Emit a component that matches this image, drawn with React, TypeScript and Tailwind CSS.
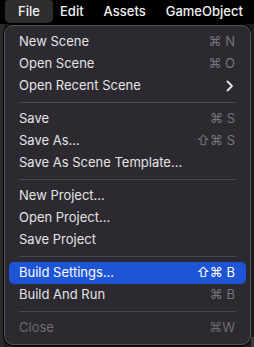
import React from 'react';

type Item =
  | { kind: 'sep' }
  | { kind: 'item'; label: string; shortcut?: string; submenu?: boolean; active?: boolean; disabled?: boolean };

const items: Item[] = [
  { kind: 'item', label: 'New Scene', shortcut: '⌘ N' },
  { kind: 'item', label: 'Open Scene', shortcut: '⌘ O' },
  { kind: 'item', label: 'Open Recent Scene', submenu: true },
  { kind: 'sep' },
  { kind: 'item', label: 'Save', shortcut: '⌘ S' },
  { kind: 'item', label: 'Save As...', shortcut: '⇧⌘ S' },
  { kind: 'item', label: 'Save As Scene Template...' },
  { kind: 'sep' },
  { kind: 'item', label: 'New Project...' },
  { kind: 'item', label: 'Open Project...' },
  { kind: 'item', label: 'Save Project' },
  { kind: 'sep' },
  { kind: 'item', label: 'Build Settings...', shortcut: '⇧⌘ B', active: true },
  { kind: 'item', label: 'Build And Run', shortcut: '⌘ B' },
  { kind: 'sep' },
  { kind: 'item', label: 'Close', shortcut: '⌘W', disabled: true },
];

const font = { fontFamily: 'Inter, "DejaVu Sans", sans-serif' };

export default function App() {
  return (
    <div className="w-[254px] h-[347px] bg-[#1c1c1c] overflow-hidden flex flex-col" style={font}>
      <div className="h-[24px] bg-black flex items-center text-[13px] font-medium text-[#f2f2f2] shrink-0">
        <div className="ml-[5px] h-[23px] self-start w-[48px] flex items-center justify-center rounded-b-[5px] rounded-t-[3px] bg-[#2e2e2e]">File</div>
        <div className="ml-[7px]">Edit</div>
        <div className="ml-[20px]">Assets</div>
        <div className="ml-[20px]">GameObject</div>
      </div>
      <div className="flex flex-1">
        <div className="w-[4px] bg-[#2a2a2a] shrink-0" />
        <div className="w-[247px] self-start mt-[1px] rounded-[9px] border border-[#55535a] bg-[#2c2a30] px-[4px] pt-[5px] pb-[5px] flex flex-col shadow-[0_0_0_1px_#000]">
          {items.map((it, i) =>
            it.kind === 'sep' ? (
              <div key={i} className="h-[11px] flex items-center px-[10px]">
                <div className="h-px w-full bg-[#4a484f]" />
              </div>
            ) : (
              <div
                key={i}
                className={`h-[22px] flex items-center justify-between pl-[10px] pr-[11px] rounded-[5px] text-[13px] ${
                  it.active ? 'bg-[#1d55d6] text-white' : it.disabled ? 'text-[#6c6a70]' : 'text-[#e4e3e6]'
                }`}
              >
                <span>{it.label}</span>
                {it.shortcut && (
                  <span
                    className={`text-[13px] ${
                      it.active ? 'text-white' : it.disabled ? 'text-[#6c6a70]' : 'text-[#77757b]'
                    }`}
                  >
                    {it.shortcut}
                  </span>
                )}
                {it.submenu && (
                  <svg width="8" height="12" viewBox="0 0 8 12" className="mr-[1px]">
                    <path d="M1.5 1.5 L6 6 L1.5 10.5" stroke="#e4e3e6" strokeWidth="1.8" fill="none" strokeLinecap="round" strokeLinejoin="round" />
                  </svg>
                )}
              </div>
            )
          )}
        </div>
        <div className="flex-1 flex flex-col">
          <div className="flex-1 bg-[#1c1c1c]" />
          <div className="h-[10px] bg-[#3a3a3a]" />
        </div>
      </div>
    </div>
  );
}
